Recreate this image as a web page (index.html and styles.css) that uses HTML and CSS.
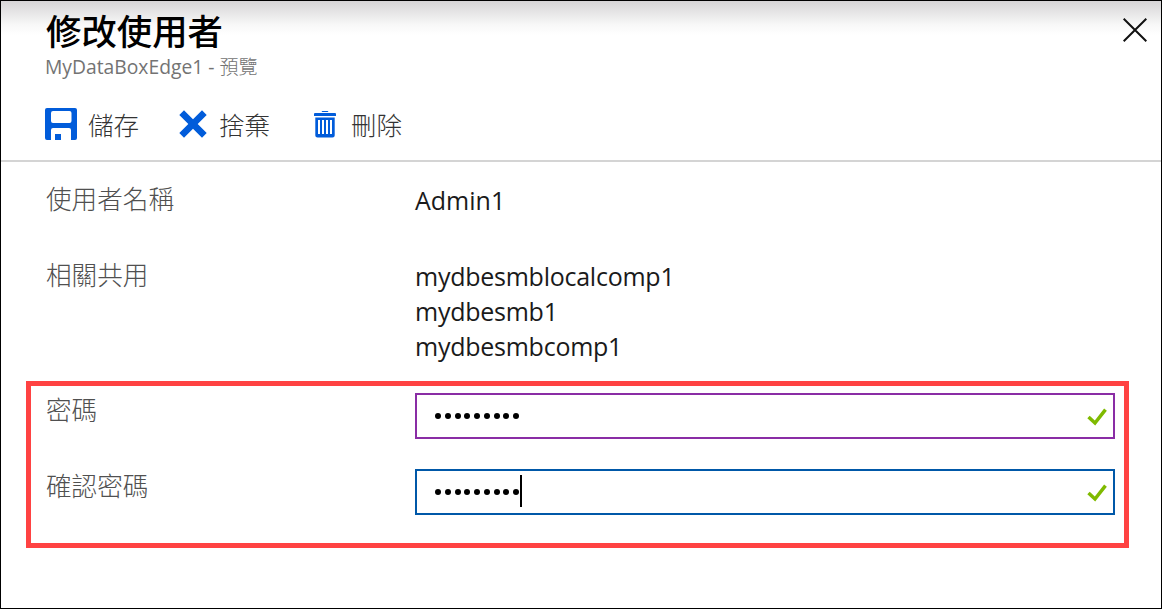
FILE: index.html
```html
<!DOCTYPE html>
<html lang="zh-Hant">
<head>
<meta charset="utf-8">
<title>修改使用者</title>
<link rel="stylesheet" href="styles.css">
</head>
<body>
<main class="blade">
  <header class="header">
    <div class="heading">
      <h1 class="title">修改使用者</h1>
      <p class="subtitle"><span class="resource">MyDataBoxEdge1 - </span><span class="preview">預覽</span></p>
    </div>
    <svg class="close" viewBox="0 0 24 24"><path d="M.7.7 23.3 23.3M23.3.7.7 23.3"/></svg>
  </header>
  <nav class="toolbar">
    <div class="action save">
      <svg class="icon" width="32" height="32" viewBox="0 0 32 32"><path fill-rule="evenodd" d="M2 0H30Q32 0 32 2V30Q32 32 30 32H26V22Q26 20 24 20H8Q6 20 6 22V32H2Q0 32 0 30V2Q0 0 2 0ZM8 3Q6 3 6 5V13Q6 15 8 15H24.500Q26.500 15 26.500 13V5Q26.500 3 24.500 3ZM10 26H16V32H10Z"/></svg>
      <span>儲存</span>
    </div>
    <div class="action discard">
      <svg class="icon" width="28" height="28" viewBox="0 0 28 28"><path d="M5 .3 14 9.300 23 .3 27.700 5 18.700 14 27.700 23 23 27.700 14 18.700 5 27.700 .3 23 9.300 14 .3 5Z"/></svg>
      <span>捨棄</span>
    </div>
    <div class="action delete">
      <svg class="icon" width="22" height="28" viewBox="0 0 22 28"><path fill-rule="evenodd" d="M8.500 1H13.500Q14.300 1 14.300 2H7.700Q7.700 1 8.500 1ZM1 3H21Q22 3 22 4V6H0V4Q0 3 1 3ZM1.300 7.500H20.700V25.500Q20.700 27.500 18.500 27.500H3.500Q1.300 27.500 1.300 25.500ZM4 10V24H6V10ZM8 10V24H10V10ZM12 10V24H14V10ZM16 10V24H18V10Z"/></svg>
      <span>刪除</span>
    </div>
  </nav>
  <section class="form">
    <div class="row user"><span class="label">使用者名稱</span><span class="value">Admin1</span></div>
    <div class="row shares"><span class="label">相關共用</span>
      <div class="value list"><div>mydbesmblocalcomp1</div><div>mydbesmb1</div><div>mydbesmbcomp1</div></div>
    </div>
    <div class="highlight">
      <div class="row"><span class="label">密碼</span>
        <div class="field">
          <span class="dots"><i></i><i></i><i></i><i></i><i></i><i></i><i></i><i></i><i></i></span>
          <svg class="check" viewBox="0 0 20 18"><path d="M1.500 9 8 15 18.500 1.700"/></svg>
        </div>
      </div>
      <div class="row"><span class="label">確認密碼</span>
        <div class="field focused">
          <span class="dots"><i></i><i></i><i></i><i></i><i></i><i></i><i></i><i></i><i></i></span><span class="caret"></span>
          <svg class="check" viewBox="0 0 20 18"><path d="M1.500 9 8 15 18.500 1.700"/></svg>
        </div>
      </div>
    </div>
  </section>
</main>
</body>
</html>
```
FILE: styles.css
```css
* { box-sizing: border-box; }
body { margin: 0; font-family: "Open Sans", "Noto Sans CJK TC", sans-serif; }
.blade {
  height: 609px;
  border: 1px solid #000;
  background: linear-gradient(#d6d4d6, #e4e3e4 10px, #f8f8f8 24px, #fff 34px) #fff;
  overflow: hidden;
}
.header { display: flex; justify-content: space-between; height: 88px; padding: 0 14px 0 44px; }
.title {
  margin: 7px 0 0 1px;
  font: 500 35.400px/44px "Noto Sans CJK TC", sans-serif;
  color: #000;
}
.subtitle { display: flex; margin: 2px 0 0; line-height: 26px; font-size: 19.300px; color: #737373; white-space: pre; }
.preview { font: 300 19px/23px "Noto Sans CJK TC", sans-serif; }
.close { width: 24px; height: 24px; margin-top: 17px; }
.close path { stroke: #111; stroke-width: 2; fill: none; }
.toolbar { display: flex; height: 73px; padding-left: 44px; border-bottom: 2px solid #d4d4d4; }
.action { display: flex; align-items: center; height: 70px; font: 300 25.500px/36px "Noto Sans CJK TC", sans-serif; color: #333; }
.icon { fill: #015cda; flex: none; }
.save { width: 134px; gap: 11px; }
.discard { width: 135px; gap: 12px; }
.delete { gap: 15px; }
.form { padding-top: 20px; }
.row { display: grid; grid-template-columns: 370px 700px; padding-left: 44px; }
.label { margin: -2px 0 0 1px; font: 300 25.600px/36px "Noto Sans CJK TC", sans-serif; color: #505050; }
.value { font-size: 25px; line-height: 35px; color: #1a1a1a; padding-top: 1px; }
.list { letter-spacing: -.25px; }
.user { height: 76px; }
.shares { height: 123px; }
.highlight { width: 1103px; height: 167px; margin-left: 25px; border: 5px solid #ff4242; padding-top: 7px; }
.highlight .row { height: 76px; padding-left: 14px; }
.field { display: flex; align-items: center; height: 46px; border: 2px solid #8a2da5; padding: 0 6px 0 18px; background: #fff; }
.focused { border-color: #0058a8; }
.dots { display: flex; gap: 3.750px; }
.dots i { width: 6px; height: 6px; border-radius: 50%; background: #000; }
.caret { width: 2px; height: 32px; margin-left: 1px; margin-bottom: 3px; background: #000; }
.check { width: 20px; height: 18px; margin-left: auto; margin-top: 2px; }
.check path { stroke: #7fba00; stroke-width: 3.500; fill: none; }
```
